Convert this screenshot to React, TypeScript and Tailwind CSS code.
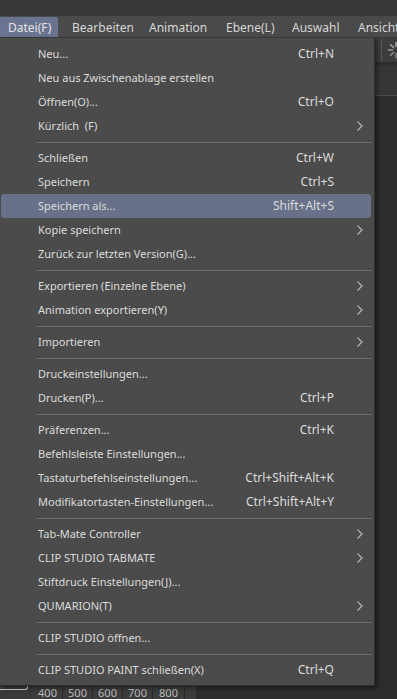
import React from "react";

type Item =
  | { type: "sep" }
  | { type: "item"; label: string; shortcut?: string; sub?: boolean; active?: boolean };

const items: Item[] = [
  { type: "item", label: "Neu...", shortcut: "Ctrl+N" },
  { type: "item", label: "Neu aus Zwischenablage erstellen" },
  { type: "item", label: "Öffnen(O)...", shortcut: "Ctrl+O" },
  { type: "item", label: "Kürzlich  (F)", sub: true },
  { type: "sep" },
  { type: "item", label: "Schließen", shortcut: "Ctrl+W" },
  { type: "item", label: "Speichern", shortcut: "Ctrl+S" },
  { type: "item", label: "Speichern als...", shortcut: "Shift+Alt+S", active: true },
  { type: "item", label: "Kopie speichern", sub: true },
  { type: "item", label: "Zurück zur letzten Version(G)..." },
  { type: "sep" },
  { type: "item", label: "Exportieren (Einzelne Ebene)", sub: true },
  { type: "item", label: "Animation exportieren(Y)", sub: true },
  { type: "sep" },
  { type: "item", label: "Importieren", sub: true },
  { type: "sep" },
  { type: "item", label: "Druckeinstellungen..." },
  { type: "item", label: "Drucken(P)...", shortcut: "Ctrl+P" },
  { type: "sep" },
  { type: "item", label: "Präferenzen...", shortcut: "Ctrl+K" },
  { type: "item", label: "Befehlsleiste Einstellungen..." },
  { type: "item", label: "Tastaturbefehlseinstellungen...", shortcut: "Ctrl+Shift+Alt+K" },
  { type: "item", label: "Modifikatortasten-Einstellungen...", shortcut: "Ctrl+Shift+Alt+Y" },
  { type: "sep" },
  { type: "item", label: "Tab-Mate Controller", sub: true },
  { type: "item", label: "CLIP STUDIO TABMATE", sub: true },
  { type: "item", label: "Stiftdruck Einstellungen(J)..." },
  { type: "item", label: "QUMARION(T)", sub: true },
  { type: "sep" },
  { type: "item", label: "CLIP STUDIO öffnen..." },
  { type: "sep" },
  { type: "item", label: "CLIP STUDIO PAINT schließen(X)", shortcut: "Ctrl+Q" },
];

function Chevron() {
  return (
    <svg width="8" height="12" viewBox="0 0 8 12" className="block">
      <path d="M1.5 1.5 L6 6 L1.5 10.5" fill="none" stroke="#b4b4b4" strokeWidth="1.2" />
    </svg>
  );
}

function Spinner() {
  const lines = [];
  for (let i = 0; i < 8; i++) {
    const a = (i * Math.PI) / 4;
    const x1 = 9 + Math.cos(a) * 3.5;
    const y1 = 9 + Math.sin(a) * 3.5;
    const x2 = 9 + Math.cos(a) * 7.5;
    const y2 = 9 + Math.sin(a) * 7.5;
    lines.push(
      <line key={i} x1={x1} y1={y1} x2={x2} y2={y2} stroke="#bdbdbd" strokeWidth="1.5" strokeLinecap="round" opacity={0.4 + i * 0.08} />
    );
  }
  return (
    <svg width="18" height="18" viewBox="0 0 18 18" className="block">
      {lines}
    </svg>
  );
}

export default function App() {
  return (
    <div
      className="relative w-[397px] h-[699px] overflow-hidden bg-[#2b2b2b] text-[11px] text-[#dcdcdc] flex flex-col"
      style={{ fontFamily: '"Noto Sans", "Open Sans", sans-serif' }}
    >
      {/* title band */}
      <div className="h-[16px] bg-[#383838] shrink-0" />
      {/* menubar */}
      <div className="h-[22px] bg-[#4a4a4a] shrink-0 flex items-stretch border-b border-[#3a3a3a] whitespace-nowrap text-[12px]">
        <div className="w-[58px] shrink-0 pl-[8px] pt-[1px] flex items-center bg-[#6a7390] rounded-tr-[2px] mt-[1px] text-[#e6e6e6]">Datei(F)</div>
        <div className="w-[77px] shrink-0 ml-[4px] pl-[10px] pt-[2px] flex items-center text-[#d6d6d6]">Bearbeiten</div>
        <div className="w-[77px] shrink-0 pl-[10px] pt-[2px] flex items-center text-[#d6d6d6]">Animation</div>
        <div className="w-[66px] shrink-0 pl-[10px] pt-[2px] flex items-center text-[#d6d6d6]">Ebene(L)</div>
        <div className="w-[66px] shrink-0 pl-[10px] pt-[2px] flex items-center text-[#d6d6d6]">Auswahl</div>
        <div className="w-[66px] shrink-0 pl-[10px] pt-[2px] flex items-center text-[#d6d6d6]">Ansicht</div>
      </div>
      {/* workspace */}
      <div className="flex-1 flex flex-col">
        <div className="h-[24px] bg-[#3d3d3d] flex items-center justify-end shrink-0">
          <div className="w-[1px] h-[22px] bg-[#5a5a5a] mr-[5px]" />
          <div className="mr-[-8px]">
            <Spinner />
          </div>
        </div>
        <div className="h-[4px] bg-[#2e2e2e]" />
        <div className="h-[30px] bg-[#353535] border-b border-[#4a4a4a]" />
        <div className="flex-1 bg-[#2d2d2d]" />
        <div className="h-[14px] flex items-stretch shrink-0 bg-[#2d2d2d]">
          <div className="w-[33px] bg-[#3a3a3a] flex items-start">
            <div className="mt-[1px] ml-[0px] w-[28px] h-[4px] border-b border-r border-[#cfcfcf] rounded-br-[3px]" />
          </div>
          {["400", "500", "600", "700", "800"].map((n, i) => (
            <div
              key={n}
              className={
                "bg-[#3c3c3c] border-r border-[#2a2a2a] flex items-center justify-center text-[11px] text-[#bdbdbd] leading-none " +
                (i === 4 ? "w-[32px]" : "w-[30px]")
              }
            >
              {n}
            </div>
          ))}
          <div className="w-[11px] bg-[#3c3c3c]" />
        </div>
      </div>

      {/* dropdown menu */}
      <div className="absolute left-0 top-[38px] w-[375px] bg-[#4b4b4b] border-r border-b border-[#2f2f2f] pt-[4px] pb-[3px] shadow-[2px_2px_4px_rgba(0,0,0,0.45)]">
        {items.map((it, idx) =>
          it.type === "sep" ? (
            <div key={idx} className="h-[8px] flex items-center pl-[36px] pr-[2px]">
              <div className="h-[1px] w-full bg-[#6b6b6b]" />
            </div>
          ) : (
            <div
              key={idx}
              className={
                "h-[24px] flex items-center whitespace-nowrap mx-[1px] pl-[37px] " +
                (it.active ? "bg-[#687189] rounded-[3px] mr-[3px]" : "mr-[3px]")
              }
            >
              <span className="flex-1 whitespace-pre">{it.label}</span>
              <span className="w-[100px] text-right text-[12px]">{it.shortcut ?? ""}</span>
              <span className="w-[37px] flex justify-end pr-[7px]">{it.sub ? <Chevron /> : null}</span>
            </div>
          )
        )}
      </div>
    </div>
  );
}
